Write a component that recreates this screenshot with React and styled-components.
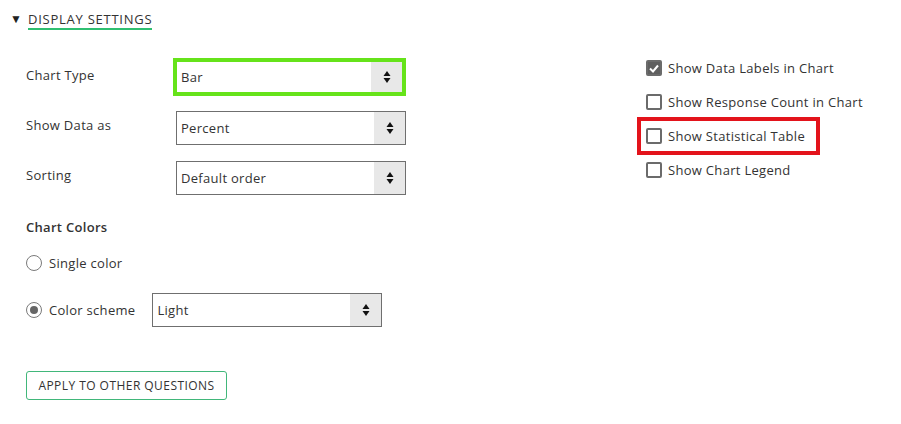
import React from "react";
import styled, { createGlobalStyle } from "styled-components";

const Global = createGlobalStyle`
  html, body { margin: 0; padding: 0; background: #fff; }
  body { font-family: "Open Sans", "Liberation Sans", sans-serif; color: #333; letter-spacing: 0.3px; }
`;

const Page = styled.div`
  width: 901px;
  height: 424px;
  box-sizing: border-box;
  padding: 11px 0 0 10px;
  font-size: 13px;
`;

const Header = styled.div`
  display: flex;
  align-items: center;
  gap: 9px;
  height: 17px;
`;

const Caret = styled.span`
  font-size: 12px;
  color: #222;
  width: 9px;
  margin-top: -2px;
`;

const HeaderTitle = styled.span`
  font-size: 13px;
  letter-spacing: 0.75px;
  color: #333;
  border-bottom: 2px solid #2fbf71;
  padding-bottom: 1px;
  line-height: 15px;
  margin-top: 3px;
`;

const Body = styled.div`
  display: flex;
  padding: 33px 0 0 16px;
`;

const LeftCol = styled.div`
  width: 620px;
  display: flex;
  flex-direction: column;
`;

const RightCol = styled.div`
  display: flex;
  flex-direction: column;
  gap: 14px;
  margin-top: -3px;
`;

const FieldRow = styled.div`
  display: flex;
  align-items: flex-start;
  height: 34px;
  margin-bottom: 16px;
`;

const FieldLabel = styled.div`
  width: 150px;
  padding-top: 6px;
  line-height: 16px;
`;

const SelectBox = styled.div`
  display: flex;
  box-sizing: border-box;
  width: ${(p) => (p.$hl ? 233 : p.$w || 230)}px;
  height: ${(p) => (p.$hl ? 38 : 34)}px;
  border: ${(p) => (p.$hl ? "4px solid #66e31a" : "1px solid #6f6f6f")};
  margin: ${(p) => (p.$hl ? "-3px 0 0 -3px" : "0")};
  background: #fff;
`;

const SelectValue = styled.div`
  flex: 1;
  display: flex;
  align-items: center;
  padding-left: 4px;
  color: #333;
`;

const ArrowBox = styled.div`
  width: 31px;
  background: #e8e8e8;
  display: flex;
  align-items: center;
  justify-content: center;
`;

const Arrows = () => (
  <svg width="10" height="16" viewBox="0 0 10 16">
    <path d="M5 2 L8.5 7 L1.5 7 Z" fill="#111" />
    <path d="M1.5 9 L8.5 9 L5 14 Z" fill="#111" />
  </svg>
);

const Select = ({ value, hl, w }) => (
  <SelectBox $hl={hl} $w={w}>
    <SelectValue>{value}</SelectValue>
    <ArrowBox>
      <Arrows />
    </ArrowBox>
  </SelectBox>
);

const SectionTitle = styled.div`
  font-weight: 600;
  margin-top: 8px;
  line-height: 16px;
  color: #333;
`;

const RadioRow = styled.label`
  display: flex;
  align-items: center;
  gap: 7px;
  margin-top: ${(p) => p.$mt}px;
`;

const RadioCircle = styled.span`
  box-sizing: border-box;
  width: 16px;
  height: 16px;
  border-radius: 50%;
  border: 1.5px solid #7a7a7a;
  display: flex;
  align-items: center;
  justify-content: center;
  &::after {
    content: "";
    display: ${(p) => (p.$on ? "block" : "none")};
    width: 8px;
    height: 8px;
    border-radius: 50%;
    background: #666;
  }
`;

const RadioText = styled.span`
  margin-right: ${(p) => p.$mr || 0}px;
`;

const ApplyButton = styled.button`
  margin-top: 44px;
  align-self: flex-start;
  box-sizing: border-box;
  width: 201px;
  height: 29px;
  border: 1px solid #41b77a;
  border-radius: 3px;
  background: #fff;
  font-family: inherit;
  font-size: 12px;
  color: #333;
  letter-spacing: 0.45px;
  padding: 0;
`;

const CheckWrap = styled.div`
  margin-left: ${(p) => (p.$hl ? -9 : 0)}px;
  box-sizing: border-box;
  ${(p) =>
    p.$hl
      ? `border: 4px solid #e3131b; padding: 5px 11px 5px 5px; margin-top: -9px; margin-bottom: -9px; align-self: flex-start;`
      : ""}
`;

const CheckRow = styled.label`
  display: flex;
  align-items: center;
  gap: 6px;
  height: 20px;
`;

const Box = styled.span`
  box-sizing: border-box;
  width: 16px;
  height: 16px;
  border-radius: 2px;
  border: 2px solid #6b6b6b;
  background: ${(p) => (p.$on ? "#5f5f5f" : "#fff")};
  display: flex;
  align-items: center;
  justify-content: center;
`;

const Check = ({ on, label, hl }) => (
  <CheckWrap $hl={hl}>
    <CheckRow>
      <Box $on={on}>
        {on && (
          <svg width="10" height="9" viewBox="0 0 10 9">
            <path d="M1 4.5 L4 7.5 L9 1.5" stroke="#fff" strokeWidth="2" fill="none" />
          </svg>
        )}
      </Box>
      <span>{label}</span>
    </CheckRow>
  </CheckWrap>
);

export default function App() {
  return (
    <>
      <Global />
      <Page>
        <Header>
          <Caret>▼</Caret>
          <HeaderTitle>DISPLAY SETTINGS</HeaderTitle>
        </Header>
        <Body>
          <LeftCol>
            <FieldRow>
              <FieldLabel>Chart Type</FieldLabel>
              <Select value="Bar" hl />
            </FieldRow>
            <FieldRow>
              <FieldLabel>Show Data as</FieldLabel>
              <Select value="Percent" />
            </FieldRow>
            <FieldRow>
              <FieldLabel>Sorting</FieldLabel>
              <Select value="Default order" />
            </FieldRow>
            <SectionTitle>Chart Colors</SectionTitle>
            <RadioRow $mt={19}>
              <RadioCircle />
              <RadioText>Single color</RadioText>
            </RadioRow>
            <RadioRow $mt={21}>
              <RadioCircle $on />
              <RadioText $mr={10}>Color scheme</RadioText>
              <Select value="Light" />
            </RadioRow>
            <ApplyButton>APPLY TO OTHER QUESTIONS</ApplyButton>
          </LeftCol>
          <RightCol>
            <Check on label="Show Data Labels in Chart" />
            <Check label="Show Response Count in Chart" />
            <Check hl label="Show Statistical Table" />
            <Check label="Show Chart Legend" />
          </RightCol>
        </Body>
      </Page>
    </>
  );
}
